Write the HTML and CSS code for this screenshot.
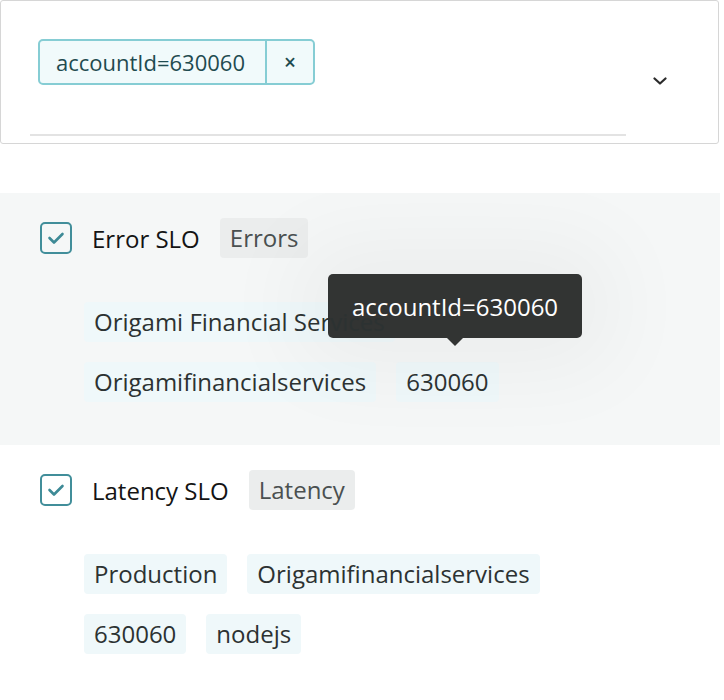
FILE: index.html
```html
<!DOCTYPE html>
<html>
<head>
<meta charset="utf-8">
<link rel="stylesheet" href="styles.css">
</head>
<body>
<div class="page">
  <div class="filter">
    <div class="filter-main">
      <div class="chips">
        <span class="chip"><span class="chip-label">accountId=630060</span><span class="chip-remove">×</span></span>
      </div>
    </div>
    <div class="chevron">
      <svg width="14" height="8" viewBox="0 0 14 8"><polyline points="1.5,1.5 7,6.5 12.5,1.5" fill="none" stroke="#2b2b2b" stroke-width="2.2" stroke-linecap="round" stroke-linejoin="round"/></svg>
    </div>
  </div>

  <div class="list">
    <div class="slo slo-hover">
      <div class="slo-head">
        <span class="checkbox"><svg width="28" height="28" viewBox="0 0 28 28"><polyline points="7.5,14 12,18.5 20.5,10" fill="none" stroke="#3d8a96" stroke-width="2.6" stroke-linecap="round" stroke-linejoin="round"/></svg></span>
        <span class="slo-name">Error SLO</span>
        <span class="pill">Errors</span>
      </div>
      <div class="tags">
        <span class="tag"><span class="tag-text">Origami Financial Services</span></span>
        <span class="tag"><span class="tag-text">Origamifinancialservices</span></span>
        <span class="tag"><span class="tag-text">630060</span></span>
      </div>
      <div class="tooltip">accountId=630060</div>
    </div>

    <div class="slo">
      <div class="slo-head">
        <span class="checkbox"><svg width="28" height="28" viewBox="0 0 28 28"><polyline points="7.5,14 12,18.5 20.5,10" fill="none" stroke="#3d8a96" stroke-width="2.6" stroke-linecap="round" stroke-linejoin="round"/></svg></span>
        <span class="slo-name">Latency SLO</span>
        <span class="pill">Latency</span>
      </div>
      <div class="tags">
        <span class="tag"><span class="tag-text">Production</span></span>
        <span class="tag"><span class="tag-text">Origamifinancialservices</span></span>
        <span class="tag"><span class="tag-text">630060</span></span>
        <span class="tag"><span class="tag-text">nodejs</span></span>
      </div>
    </div>
  </div>
</div>
</body>
</html>
```

FILE: styles.css
```css
html, body {
  margin: 0;
  padding: 0;
  background: #ffffff;
}

body {
  font-family: "Open Sans", "Noto Sans", sans-serif;
  color: #1a1a1a;
}

.page {
  width: 720px;
}

.filter {
  display: flex;
  box-sizing: border-box;
  width: 719px;
  height: 144px;
  border: 1px solid #d6d6d6;
  border-radius: 3px;
  padding: 0 0 7px 29px;
}

.filter-main {
  width: 596px;
  box-sizing: border-box;
  padding: 38px 8px 0;
  border-bottom: 2px solid #e3e3e3;
}

.chips {
  display: flex;
}

.chip {
  display: flex;
  align-items: stretch;
  height: 46px;
  box-sizing: border-box;
  border: 2px solid #86cdd4;
  border-radius: 5px;
  background: #f1fafb;
  color: #1f4b50;
  font-size: 22px;
}

.chip-label {
  display: flex;
  align-items: center;
  padding: 0 20px 0 16px;
  border-right: 2px solid #86cdd4;
}

.chip-remove {
  display: flex;
  align-items: center;
  justify-content: center;
  width: 46px;
  font-size: 21px;
  font-weight: 600;
  color: #1f4b50;
}

.chevron {
  display: flex;
  align-items: center;
  margin: 24px 0 0 27px;
}

.chevron svg {
  display: block;
}

.list {
  margin-top: 49px;
}

.slo {
  position: relative;
  padding: 25px 0 43px 40px;
}

.slo-hover {
  background: #f5f7f7;
  overflow: hidden;
}

.slo-head {
  display: flex;
  align-items: center;
  height: 40px;
}

.checkbox {
  display: flex;
  align-items: center;
  justify-content: center;
  box-sizing: border-box;
  width: 32px;
  height: 32px;
  border: 2px solid #418e9a;
  border-radius: 5px;
}

.checkbox svg {
  display: block;
}

.slo-name {
  margin-left: 20px;
  font-size: 24px;
  color: #141414;
}

.pill {
  margin-left: 20px;
  padding: 0 10px;
  height: 40px;
  line-height: 40px;
  border-radius: 4px;
  background: #ebeded;
  color: #4a5050;
  font-size: 24px;
}

.tags {
  display: flex;
  flex-wrap: wrap;
  gap: 20px;
  width: 500px;
  margin: 44px 0 0 44px;
}

.tag {
  height: 40px;
  line-height: 40px;
  padding: 0 10px;
  border-radius: 4px;
  background: #eff8fa;
  color: #2c3232;
  font-size: 24px;
}

.tag-text {
  position: relative;
  z-index: 2;
}

.tooltip {
  position: absolute;
  z-index: 1;
  left: 328px;
  top: 81px;
  width: 254px;
  height: 64px;
  box-sizing: border-box;
  display: flex;
  align-items: center;
  justify-content: center;
  background: #323433;
  color: #ffffff;
  border-radius: 5px;
  font-size: 24px;
  box-shadow: 0 0 90px 30px rgba(0, 0, 0, 0.045);
}

.tooltip::after {
  content: "";
  position: absolute;
  left: 50%;
  bottom: -8px;
  margin-left: -8px;
  border-left: 8px solid transparent;
  border-right: 8px solid transparent;
  border-top: 8px solid #323433;
}
```
